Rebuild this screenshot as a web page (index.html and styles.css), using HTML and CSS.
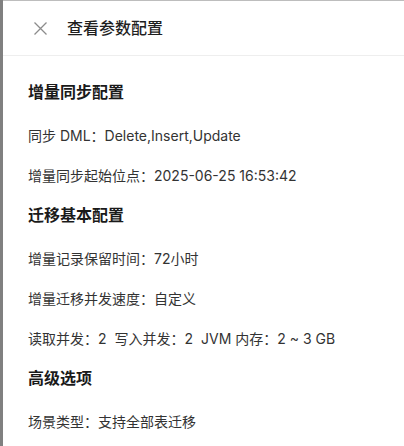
FILE: index.html
```html
<!DOCTYPE html>
<html lang="zh-CN">
<head>
<meta charset="utf-8">
<title>查看参数配置</title>
<link rel="stylesheet" href="styles.css">
</head>
<body>
<div class="drawer">
  <div class="drawer-header">
    <svg class="close" width="13" height="13" viewBox="0 0 13 13">
      <path d="M0.5 0.5 L12.5 12.5 M12.5 0.5 L0.5 12.5" stroke="#8c8c8c" stroke-width="1.3" fill="none"/>
    </svg>
    <div class="drawer-title">查看参数配置</div>
  </div>
  <div class="drawer-body">
    <section class="group">
      <h3 class="group-title">增量同步配置</h3>
      <div class="items">
        <div class="item">同步 DML：Delete,Insert,Update</div>
        <div class="item">增量同步起始位点：2025-06-25 16:53:42</div>
      </div>
    </section>
    <section class="group">
      <h3 class="group-title">迁移基本配置</h3>
      <div class="items">
        <div class="item">增量记录保留时间：72小时</div>
        <div class="item">增量迁移并发速度：自定义</div>
        <div class="item"><span class="kv">读取并发：2</span><span class="kv">写入并发：2</span><span class="kv">JVM 内存：2 ~ 3 GB</span></div>
      </div>
    </section>
    <section class="group">
      <h3 class="group-title">高级选项</h3>
      <div class="items">
        <div class="item">场景类型：支持全部表迁移</div>
      </div>
    </section>
  </div>
</div>
</body>
</html>
```

FILE: styles.css
```css
html, body {
  margin: 0;
  padding: 0;
  height: 100%;
}
body {
  background: #808080;
  font-family: Inter, "Noto Sans CJK SC", sans-serif;
  overflow: hidden;
}
.drawer {
  margin-left: 3px;
  height: 100%;
  box-sizing: border-box;
  background: #ffffff;
  border-top: 1px solid #bdbdbd;
}
.drawer-header {
  height: 54px;
  border-bottom: 1px solid #eeeeee;
  display: flex;
  align-items: center;
  padding-left: 31px;
  gap: 20px;
}
.close {
  display: block;
  flex: none;
}
.drawer-title {
  font-size: 16px;
  font-weight: 500;
  color: #1f1f1f;
  line-height: 24px;
}
.drawer-body {
  padding: 24px 25px;
  display: flex;
  flex-direction: column;
  gap: 16px;
}
.group {
  display: flex;
  flex-direction: column;
  gap: 21px;
}
.group-title {
  margin: 0;
  font-size: 16px;
  font-weight: 600;
  line-height: 24px;
  color: #1a1a1a;
}
.items {
  display: flex;
  flex-direction: column;
  gap: 18px;
}
.item {
  font-size: 14px;
  line-height: 22px;
  color: #333333;
}
.kv + .kv {
  margin-left: 8px;
}
```
